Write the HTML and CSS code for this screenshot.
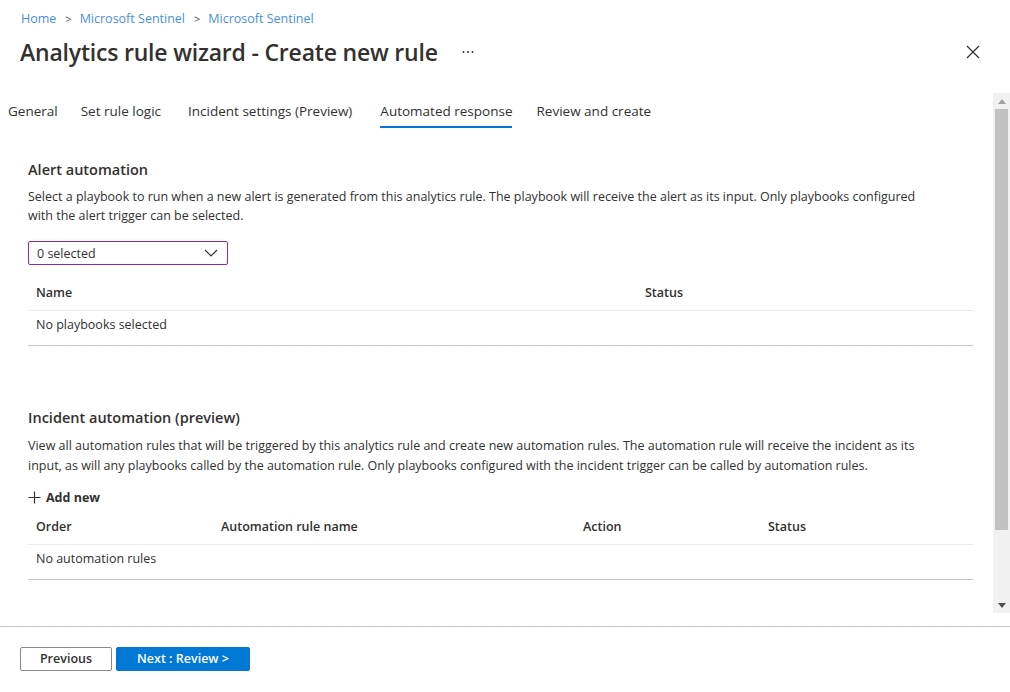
FILE: index.html
```html
<!DOCTYPE html>
<html lang="en">
<head>
<meta charset="utf-8">
<title>Analytics rule wizard - Create new rule</title>
<link rel="stylesheet" href="styles.css">
</head>
<body>
<div class="page">
  <header class="header">
    <nav class="crumbs">
      <a class="crumb">Home</a><span class="sep">&gt;</span>
      <a class="crumb">Microsoft Sentinel</a><span class="sep">&gt;</span>
      <a class="crumb">Microsoft Sentinel</a>
    </nav>
    <div class="title-row">
      <h1 class="title">Analytics rule wizard - Create new rule</h1>
      <span class="more">
        <svg width="12" height="4" viewBox="0 0 12 4"><circle cx="1.5" cy="2" r="1" fill="#323130"/><circle cx="6" cy="2" r="1" fill="#323130"/><circle cx="10.5" cy="2" r="1" fill="#323130"/></svg>
      </span>
      <span class="spacer"></span>
      <span class="close">
        <svg width="14" height="14" viewBox="0 0 14 14"><path d="M1 1L13 13M13 1L1 13" stroke="#323130" stroke-width="1.2" fill="none"/></svg>
      </span>
    </div>
  </header>

  <div class="scroll-area">
    <div class="content">
      <div class="tabs">
        <span class="tab t-general">General</span>
        <span class="tab t-logic">Set rule logic</span>
        <span class="tab t-incident">Incident settings (Preview)</span>
        <span class="tab t-auto active">Automated response</span>
        <span class="tab t-review">Review and create</span>
      </div>

      <section class="section alert">
        <h2 class="sec-title">Alert automation</h2>
        <p class="desc">Select a playbook to run when a new alert is generated from this analytics rule. The playbook will receive the alert as its input. Only playbooks configured with the alert trigger can be selected.</p>
        <div class="dropdown">
          <span>0 selected</span>
          <svg width="14" height="8" viewBox="0 0 14 8"><path d="M1 1L7 7L13 1" stroke="#323130" stroke-width="1.1" fill="none"/></svg>
        </div>
        <div class="table t1">
          <div class="row head"><span>Name</span><span>Status</span></div>
          <div class="row body"><span>No playbooks selected</span><span></span></div>
        </div>
      </section>

      <section class="section incident">
        <h2 class="sec-title">Incident automation (preview)</h2>
        <p class="desc desc2">View all automation rules that will be triggered by this analytics rule and create new automation rules. The automation rule will receive the incident as its input, as will any playbooks called by the automation rule. Only playbooks configured with the incident trigger can be called by automation rules.</p>
        <div class="add-new">
          <svg width="13" height="13" viewBox="0 0 13 13"><path d="M6.5 0.5V12.5M0.5 6.5H12.5" stroke="#323130" stroke-width="1.2" fill="none"/></svg>
          <span>Add new</span>
        </div>
        <div class="table t2">
          <div class="row head"><span>Order</span><span>Automation rule name</span><span>Action</span><span>Status</span></div>
          <div class="row body"><span>No automation rules</span><span></span><span></span><span></span></div>
        </div>
      </section>
    </div>
    <div class="scrollbar">
      <div class="arrow up"><svg width="8" height="5" viewBox="0 0 8 5"><path d="M0 5L4 0L8 5Z" fill="#a3a3a3"/></svg></div>
      <div class="thumb"></div>
      <div class="track-rest"></div>
      <div class="arrow down"><svg width="8" height="5" viewBox="0 0 8 5"><path d="M0 0L4 5L8 0Z" fill="#505050"/></svg></div>
    </div>
  </div>

  <footer class="footer">
    <button class="btn secondary">Previous</button>
    <button class="btn primary">Next : Review &gt;</button>
  </footer>
</div>
</body>
</html>
```

FILE: styles.css
```css
* { box-sizing: border-box; }
html, body { margin: 0; padding: 0; background: #fff; }
body {
  font-family: "Open Sans", "Noto Sans", "Liberation Sans", sans-serif;
  color: #323130;
  font-size: 12.5px;
  width: 1010px;
  height: 692px;
  overflow: hidden;
}
.page { display: flex; flex-direction: column; height: 692px; }

.header { padding-left: 21px; }
.crumbs { height: 36px; display: flex; align-items: center; font-size: 12.5px; }
.crumb { color: #4a8fdc; text-decoration: none; }
.sep { color: #555; font-size: 11px; margin: 0 8px 0 9px; }

.title-row { height: 32px; display: flex; align-items: center; margin-bottom: 25px; }
.title { margin: 0 0 0 -1px; font-size: 23px; font-weight: 600; letter-spacing: -0.2px; line-height: 32px; color: #323130; }
.more { margin-left: 24px; display: flex; align-items: center; }
.spacer { flex: 1; }
.close { margin-right: 30px; display: flex; align-items: center; }

.scroll-area { height: 520px; display: flex; }
.content { flex: 1; padding-right: 20px; }

.tabs { display: flex; height: 35px; padding-left: 8px; }
.tab { height: 35px; padding-top: 8px; line-height: 20px; font-size: 13.5px; border-bottom: 2px solid transparent; white-space: nowrap; }
.t-logic { margin-left: 23px; }
.t-incident { margin-left: 27px; }
.t-auto { margin-left: 28px; }
.t-review { margin-left: 24px; }
.tab.active { border-bottom-color: #0078d4; }

.section { padding-left: 28px; }
.sec-title { margin: 0; font-size: 14.5px; font-weight: 600; line-height: 20px; }
.alert .sec-title { margin-top: 32px; }
.desc { margin: 7px 0 0; line-height: 19px; max-width: 890px; }
.desc2 { margin-top: 8px; line-height: 20px; }

.dropdown {
  margin-top: 16px;
  width: 200px; height: 24px;
  border: 1px solid #8a2ba8;
  border-radius: 2px;
  display: flex; align-items: center; justify-content: space-between;
  padding: 0 9px 0 8px;
}

.table { margin-top: 9px; }
.row { display: grid; }
.t1 .row { grid-template-columns: 609px 1fr; }
.t2 .row { grid-template-columns: 185px 362px 185px 1fr; }
.row span { padding-left: 8px; }
.row.head { height: 37px; align-items: center; font-weight: 600; border-bottom: 1px solid #edebe9; }
.row.body { height: 35px; padding-top: 4px; line-height: 20px; border-bottom: 1px solid #c8c6c4; }

.incident .sec-title { margin-top: 62px; }
.add-new { margin-top: 11px; height: 20px; display: flex; align-items: center; gap: 5px; font-weight: 700; font-size: 12.5px; }
.t2 { margin-top: 1px; }
.t2 .row.body { padding-top: 4px; }

.scrollbar { width: 17px; background: #f1f1f1; display: flex; flex-direction: column; align-items: center; }
.arrow { height: 16px; display: flex; align-items: center; justify-content: center; }
.thumb { width: 13px; height: 421px; background: #c1c1c1; }
.track-rest { flex: 1; }

.footer { margin-top: 13px; border-top: 1px solid #c8c6c4; padding: 20px 0 0 20px; display: flex; gap: 4px; }
.btn { height: 24px; font-family: inherit; font-size: 12.5px; font-weight: 600; line-height: 20px; border-radius: 2px; cursor: pointer; padding: 0 0 1px; }
.btn.secondary { width: 92px; background: #fff; border: 1px solid #8a8886; color: #323130; }
.btn.primary { width: 134px; background: #0078d4; border: 1px solid #0078d4; color: #fff; }
```
